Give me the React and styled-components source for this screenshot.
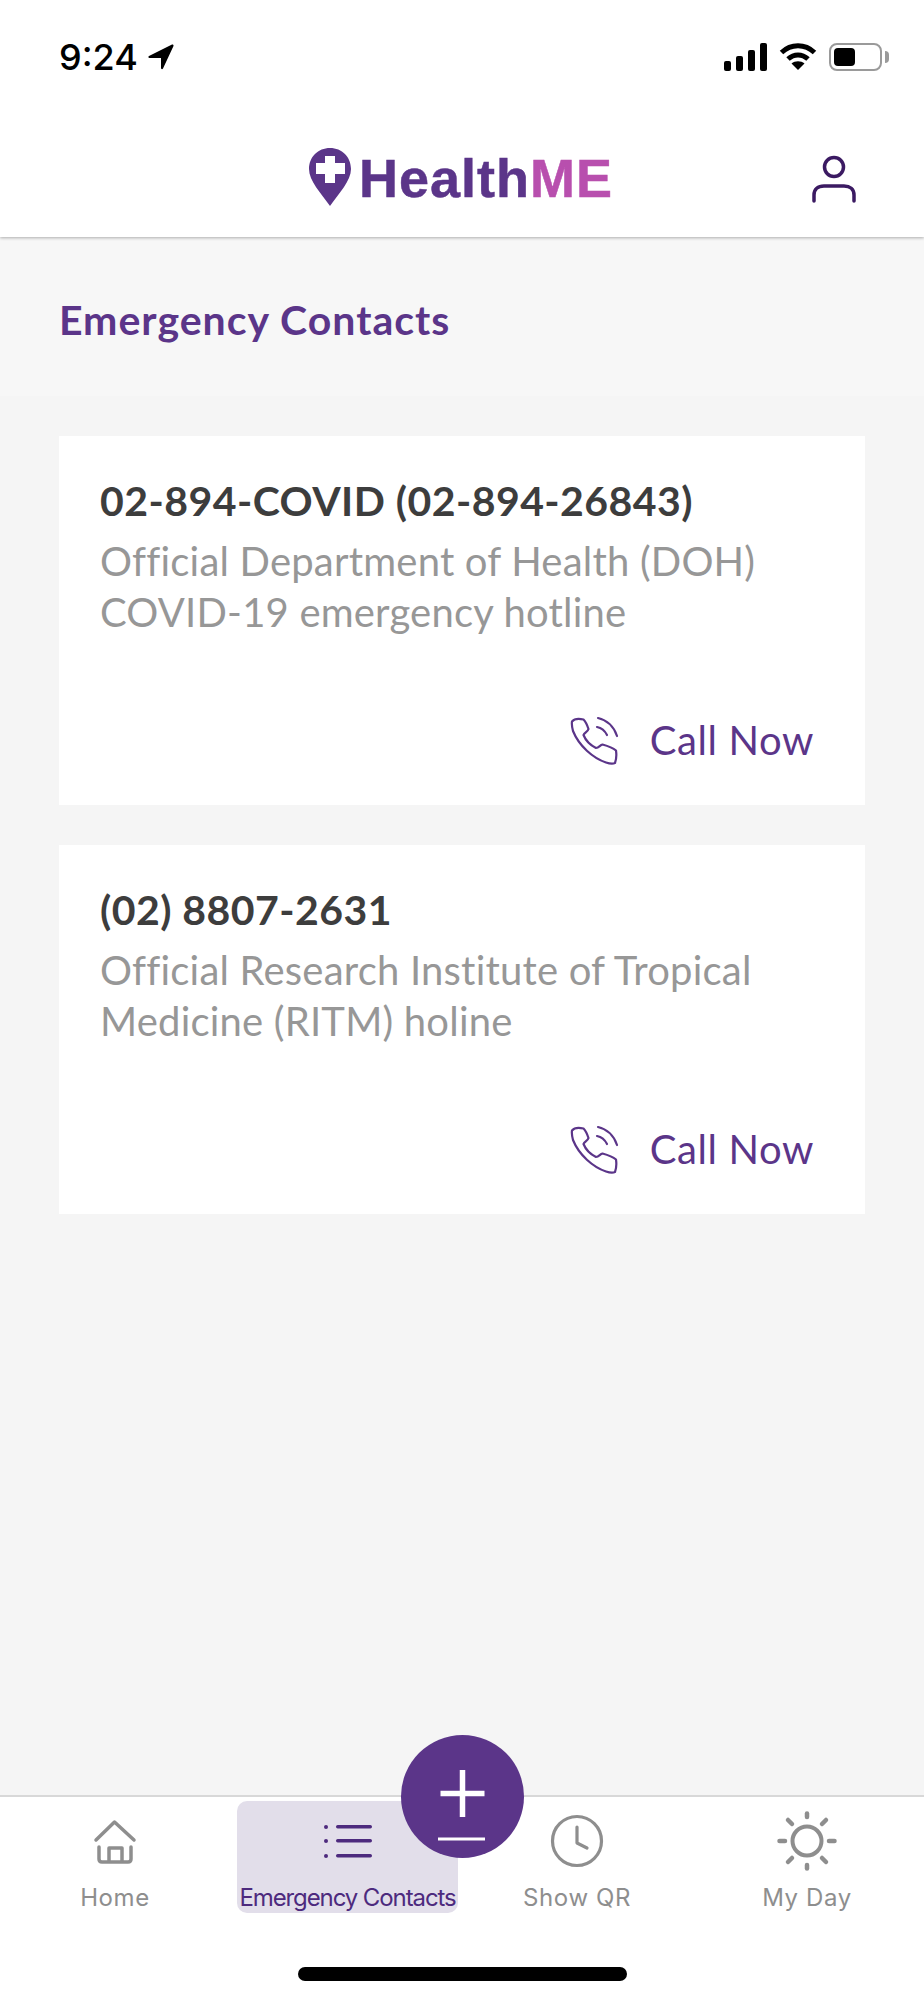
import React from 'react'
import styled, { createGlobalStyle } from 'styled-components'

const purple = '#5b3589'

const GlobalStyle = createGlobalStyle`
  html, body { margin: 0; padding: 0; background: #f5f5f5; }
  * { box-sizing: border-box; }
`

const contacts = [
  { number: '02-894-COVID (02-894-26843)', lines: ['Official Department of Health (DOH)', 'COVID-19 emergency hotline'] },
  { number: '(02) 8807-2631', lines: ['Official Research Institute of Tropical', 'Medicine (RITM) holine'] },
]

const PhoneIcon = () => (
  <svg width="50" height="50" viewBox="0 0 50 50" fill="none" stroke={purple} strokeWidth="2.2" strokeLinecap="round" strokeLinejoin="round">
    <path d="M3 6.500C5 4 10 3.500 14.500 4.500C16 6 18.500 11 19.500 14C19 16.500 15 18 14.500 20C16.500 25 21 30 27 33C30 33 31 30 33.500 29.500C37 30.500 44 33 47 35.500C47.500 39 47.500 44 46 48C44 49 40 48.500 37 47.500C24 43 10 31 4 16C3 12 2.500 9 3 6.500Z" />
    <path d="M29 3C38 5 45 12 48 21" />
    <path d="M28 12C33 13 36 16 38 20" />
  </svg>
)

const HomeIcon = () => (
  <svg width="44" height="46" viewBox="0 0 44 46" fill="none" stroke="#8e8e8e" strokeWidth="3.500" strokeLinecap="round" strokeLinejoin="round">
    <path d="M3 22L21.500 4L41 22" />
    <path d="M6 29V41C6 43 7 44 9 44H35C37 44 38 43 38 41V29" />
    <path d="M16 43V30H29V43" />
  </svg>
)

const ListIcon = () => (
  <svg width="50" height="34" viewBox="0 0 50 34" fill="#4d2a7e">
    <circle cx="3" cy="3" r="2" />
    <circle cx="3" cy="17" r="2" />
    <circle cx="3" cy="32" r="2" />
    <rect x="13" y="1" width="36" height="3.500" rx="1.700" />
    <rect x="13" y="15" width="36" height="3.500" rx="1.700" />
    <rect x="13" y="30" width="36" height="3.500" rx="1.700" />
  </svg>
)

const ClockIcon = () => (
  <svg width="54" height="54" viewBox="0 0 54 54" fill="none" stroke="#8e8e8e" strokeWidth="3.200" strokeLinecap="round" strokeLinejoin="round">
    <circle cx="27" cy="27" r="24.500" />
    <path d="M27 13V29L37 34" />
  </svg>
)

const SunIcon = () => (
  <svg width="64" height="64" viewBox="0 0 64 64" fill="none" stroke="#8e8e8e" strokeLinecap="round">
    <circle cx="32" cy="32" r="14.500" strokeWidth="4" />
    <g strokeWidth="4.500">
      <path d="M32 4.500V8" />
      <path d="M32 56V59.500" />
      <path d="M4.500 32H10" />
      <path d="M54 32H59.500" />
      <path d="M13 11L17 15" />
      <path d="M51 11L47 15" />
      <path d="M13 53L17 49" />
      <path d="M51 53L47 49" />
    </g>
  </svg>
)

const App = () => (
  <Page>
    <GlobalStyle />
    <StatusBar>
      <Time>
        9:24
        <svg width="26" height="26" viewBox="0 0 26 26" fill="#000">
          <path d="M24 0.500C25 0.200 25.800 1 25.500 2L15 24.500C14.500 25.500 13 25.300 13 24V14H1.500C0.300 14 0 12.500 1 12Z" />
        </svg>
      </Time>
      <StatusIcons>
        <svg width="43" height="28" viewBox="0 0 43 28" fill="#000">
          <rect x="0" y="18" width="7" height="10" rx="2" />
          <rect x="12" y="13" width="7" height="15" rx="2" />
          <rect x="24" y="7" width="7" height="21" rx="2" />
          <rect x="36" y="0" width="7" height="28" rx="2" />
        </svg>
        <svg width="38" height="28" viewBox="0 0 38 28" fill="none" stroke="#000" strokeWidth="5">
          <path d="M2.500 9.500C12 0.500 26 0.500 35.500 9.500" />
          <path d="M9 16C15 10.500 23 10.500 29 16" />
          <path d="M19 27L12.500 20.500C16 17.500 22 17.500 25.500 20.500Z" fill="#000" stroke="none" />
        </svg>
        <Battery>
          <BatteryFill />
        </Battery>
      </StatusIcons>
    </StatusBar>
    <Header>
      <span />
      <Logo>
        <svg width="42" height="58" viewBox="0 0 42 58" fill={purple}>
          <path fillRule="evenodd" d="M21 0C33 0 42 9 42 21C42 33 30 45 21 58C12 45 0 33 0 21C0 9 9 0 21 0ZM16 8V15H7V26H16V35H26V26H36V15H26V8Z" />
        </svg>
        <LogoText>Health<em>ME</em></LogoText>
      </Logo>
      <UserButton>
        <svg width="44" height="50" viewBox="0 0 44 50" fill="none" stroke="#3b1a62" strokeWidth="3.500" strokeLinecap="round">
          <circle cx="22" cy="12" r="9.500" />
          <path d="M2 46V40C2 34 6 31 12 31H32C38 31 42 34 42 40V46" />
        </svg>
      </UserButton>
    </Header>
    <TitleBand>
      <Title>Emergency Contacts</Title>
    </TitleBand>
    <Main>
      {contacts.map((contact) => (
        <Card key={contact.number}>
          <Number>{contact.number}</Number>
          <Description>
            {contact.lines.map((line) => <div key={line}>{line}</div>)}
          </Description>
          <CallRow>
            <PhoneIcon />
            <CallText>Call Now</CallText>
          </CallRow>
        </Card>
      ))}
    </Main>
    <Nav>
      <Fab>
        <svg width="50" height="75" viewBox="0 0 50 75" stroke="#fff" strokeWidth="5.500">
          <path d="M24.500 0V47M2.500 23.500H46.500" />
          <path d="M0 69H47" strokeWidth="3" />
        </svg>
      </Fab>
      <Tabs>
        <Tab>
          <TabIcon><HomeIcon /></TabIcon>
          <TabLabel>Home</TabLabel>
        </Tab>
        <Tab $active>
          <TabIcon><ListIcon /></TabIcon>
          <TabLabel $active>Emergency Contacts</TabLabel>
        </Tab>
        <Tab>
          <TabIcon><ClockIcon /></TabIcon>
          <TabLabel>Show QR</TabLabel>
        </Tab>
        <Tab>
          <TabIcon><SunIcon /></TabIcon>
          <TabLabel>My Day</TabLabel>
        </Tab>
      </Tabs>
      <HomeBar />
    </Nav>
  </Page>
)

export default App

const Page = styled.div`
  display: flex;
  flex-direction: column;
  width: 924px;
  height: 2000px;
  background: #f5f5f5;
  overflow: hidden;
`

const StatusBar = styled.div`
  position: relative;
  z-index: 2;
  display: flex;
  justify-content: space-between;
  align-items: center;
  height: 114px;
  padding: 0 42px 0 59px;
  background: #fff;
`

const Time = styled.div`
  display: flex;
  align-items: center;
  gap: 10px;
  font-family: Inter, sans-serif;
  font-size: 36px;
  font-weight: 500;
  color: #000;
`

const StatusIcons = styled.div`
  display: flex;
  align-items: center;
  gap: 12px;
`

const Battery = styled.div`
  position: relative;
  width: 53px;
  height: 28px;
  padding: 3px;
  border: 2px solid #9a9a9a;
  border-radius: 8px;

  &::after {
    content: '';
    position: absolute;
    top: 6px;
    right: -9px;
    width: 4px;
    height: 12px;
    background: #9a9a9a;
    border-radius: 0 4px 4px 0;
  }
`

const BatteryFill = styled.div`
  width: 21px;
  height: 100%;
  background: #000;
  border-radius: 4px;
`

const Header = styled.header`
  position: relative;
  z-index: 1;
  display: grid;
  grid-template-columns: 1fr auto 1fr;
  align-items: center;
  height: 123px;
  padding: 0 68px 0 66px;
  background: #fff;
  box-shadow: 0 1px 3px rgba(0, 0, 0, 0.3);
`

const Logo = styled.div`
  display: flex;
  align-items: center;
  gap: 8px;
  margin-top: 3px;
`

const LogoText = styled.div`
  padding-top: 2px;
  font-family: 'Liberation Sans', Arial, sans-serif;
  font-size: 54px;
  font-weight: 700;
  line-height: 1;
  letter-spacing: 1px;
  -webkit-text-stroke: 0.5px currentColor;
  color: ${purple};

  em {
    font-style: normal;
    color: #b84fae;
  }
`

const UserButton = styled.div`
  display: flex;
  justify-content: flex-end;
  align-self: start;
  padding-top: 41px;
`

const TitleBand = styled.div`
  padding: 61px 59px 54px;
  background: #f7f7f7;
`

const Title = styled.h1`
  margin: 0;
  font-family: Lato, sans-serif;
  font-size: 41px;
  font-weight: 700;
  line-height: 44px;
  letter-spacing: 1px;
  color: ${purple};
`

const Main = styled.main`
  flex: 1;
  display: flex;
  flex-direction: column;
  gap: 40px;
  padding: 40px 59px 0;
`

const Card = styled.section`
  height: 369px;
  padding: 42px 51px 0 41px;
  background: #fff;
`

const Number = styled.div`
  font-family: Lato, sans-serif;
  font-size: 41px;
  font-weight: 700;
  line-height: 46px;
  letter-spacing: 0.45px;
  color: #3d3d3d;
`

const Description = styled.div`
  margin-top: 12px;
  font-family: Lato, sans-serif;
  font-size: 40px;
  line-height: 51px;
  letter-spacing: 0.2px;
  color: #979797;
`

const CallRow = styled.div`
  display: flex;
  justify-content: flex-end;
  align-items: center;
  gap: 31px;
  margin-top: 77px;
`

const CallText = styled.span`
  font-family: Lato, sans-serif;
  font-size: 40px;
  letter-spacing: 0.6px;
  color: ${purple};
`

const Nav = styled.nav`
  position: relative;
  height: 205px;
  background: #fff;
  border-top: 2px solid #d8d8d8;
`

const Fab = styled.div`
  position: absolute;
  top: -62px;
  left: 401px;
  display: flex;
  justify-content: center;
  align-items: flex-start;
  padding-top: 35px;
  width: 123px;
  height: 123px;
  border-radius: 50%;
  background: ${purple};
`

const Tabs = styled.div`
  display: grid;
  grid-template-columns: 230px 228px 238px 222px;
  padding-top: 4px;
`

const Tab = styled.div`
  display: flex;
  flex-direction: column;
  align-items: center;
  height: 112px;
  margin-left: ${(p) => (p.$active ? '7px' : '0')};
  border-radius: 10px;
  background: ${(p) => (p.$active ? '#e2deea' : 'transparent')};
`

const TabIcon = styled.div`
  display: flex;
  justify-content: center;
  align-items: center;
  height: 64px;
  margin-top: 8px;
`

const TabLabel = styled.div`
  margin-top: 10px;
  font-family: Inter, sans-serif;
  font-size: 24px;
  line-height: 30px;
  white-space: nowrap;
  letter-spacing: ${(p) => (p.$active ? '-1.1px' : '0.6px')};
  color: ${(p) => (p.$active ? '#4d2a7e' : '#8e8e8e')};
`

const HomeBar = styled.div`
  position: absolute;
  left: 298px;
  bottom: 19px;
  width: 329px;
  height: 14px;
  border-radius: 7px;
  background: #000;
`
